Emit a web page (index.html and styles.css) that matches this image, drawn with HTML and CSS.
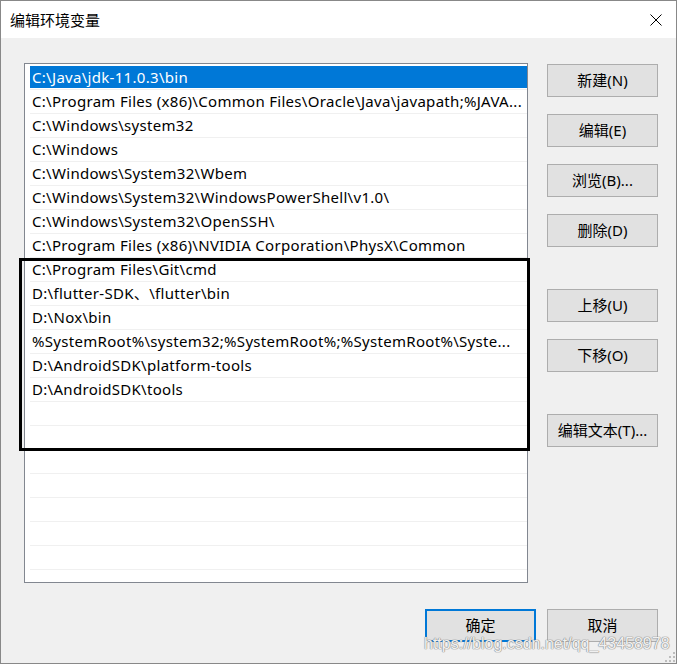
FILE: index.html
```html
<!DOCTYPE html>
<html lang="zh-CN">
<head>
<meta charset="utf-8">
<title>编辑环境变量</title>
<link rel="stylesheet" href="styles.css">
</head>
<body>
<div class="window">
  <div class="titlebar">
    <span class="title">编辑环境变量</span>
    <svg class="close" width="12" height="12" viewBox="0 0 12 12"><path d="M0.5 0.5L11.5 11.5M11.5 0.5L0.5 11.5" stroke="#000" stroke-width="1" fill="none"/></svg>
  </div>
  <div class="content">
    <div class="main">
      <div class="list">
        <div class="row selected">C:\Java\jdk-11.0.3\bin</div>
        <div class="row">C:\Program Files (x86)\Common Files\Oracle\Java\javapath;%JAVA...</div>
        <div class="row">C:\Windows\system32</div>
        <div class="row">C:\Windows</div>
        <div class="row">C:\Windows\System32\Wbem</div>
        <div class="row">C:\Windows\System32\WindowsPowerShell\v1.0\</div>
        <div class="row">C:\Windows\System32\OpenSSH\</div>
        <div class="row">C:\Program Files (x86)\NVIDIA Corporation\PhysX\Common</div>
        <div class="row">C:\Program Files\Git\cmd</div>
        <div class="row">D:\flutter-SDK、\flutter\bin</div>
        <div class="row">D:\Nox\bin</div>
        <div class="row">%SystemRoot%\system32;%SystemRoot%;%SystemRoot%\Syste...</div>
        <div class="row">D:\AndroidSDK\platform-tools</div>
        <div class="row">D:\AndroidSDK\tools</div>
        <div class="row"></div>
        <div class="row"></div>
        <div class="row"></div>
        <div class="row"></div>
        <div class="row"></div>
        <div class="row"></div>
        <div class="row"></div>
        <div class="row"></div>
      </div>
      <div class="side">
        <div class="group">
          <div class="btn">新建(N)</div>
          <div class="btn">编辑(E)</div>
          <div class="btn">浏览(B)...</div>
          <div class="btn">删除(D)</div>
        </div>
        <div class="group">
          <div class="btn">上移(U)</div>
          <div class="btn">下移(O)</div>
        </div>
        <div class="group">
          <div class="btn">编辑文本(T)...</div>
        </div>
      </div>
    </div>
    <div class="footer">
      <div class="btn default">确定</div>
      <div class="btn">取消</div>
    </div>
  </div>
  <div class="mark"></div>
  <div class="watermark">https://blog.csdn.net/qq_43458978</div>
  <svg class="grip" width="12" height="12" viewBox="0 0 12 12">
    <rect x="9" y="1" width="2" height="2" fill="#bdbdbd"/>
    <rect x="5" y="5" width="2" height="2" fill="#bdbdbd"/>
    <rect x="9" y="5" width="2" height="2" fill="#bdbdbd"/>
    <rect x="1" y="9" width="2" height="2" fill="#bdbdbd"/>
    <rect x="5" y="9" width="2" height="2" fill="#bdbdbd"/>
    <rect x="9" y="9" width="2" height="2" fill="#bdbdbd"/>
  </svg>
</div>
</body>
</html>
```
FILE: styles.css
```css
html, body {
  margin: 0;
  padding: 0;
  background: #f0f0f0;
}
.window {
  position: relative;
  box-sizing: border-box;
  width: 677px;
  height: 664px;
  border: 1px solid #888888;
  background: #f0f0f0;
  font-family: "Noto Sans", "Noto Sans CJK SC", sans-serif;
  font-size: 15px;
  color: #000;
  overflow: hidden;
}
.titlebar {
  height: 37px;
  background: #fff;
  display: flex;
  align-items: center;
  justify-content: space-between;
  padding: 0 14px 0 9px;
}
.title {
  font-family: "Noto Sans CJK SC", sans-serif;
  font-size: 15px;
  line-height: 1;
  padding-bottom: 1px;
}
.close {
  display: block;
  margin-top: 1px;
}
.content {
  padding: 25px 18px 0 23px;
}
.main {
  display: flex;
  gap: 19px;
}
.list {
  box-sizing: border-box;
  width: 504px;
  height: 520px;
  border: 1px solid #828790;
  background: #fff;
  padding: 2px 0 0 5px;
  overflow: hidden;
}
.row {
  box-sizing: border-box;
  height: 24px;
  line-height: 22px;
  padding-left: 2px;
  border-bottom: 1px solid #f0f0f0;
  white-space: nowrap;
  overflow: hidden;
  letter-spacing: 0.3px;
}
.row.selected {
  background: linear-gradient(#0078d7 0 22px, transparent 22px);
  color: #fff;
}
.side {
  width: 111px;
  padding-top: 1px;
  display: flex;
  flex-direction: column;
  gap: 42px;
}
.group {
  display: flex;
  flex-direction: column;
  gap: 17px;
}
.btn {
  box-sizing: border-box;
  width: 111px;
  height: 33px;
  border: 1px solid #adadad;
  background: #e1e1e1;
  display: flex;
  align-items: center;
  justify-content: center;
  font-size: 15px;
  line-height: 1;
  padding-bottom: 1px;
}
.footer {
  display: flex;
  justify-content: flex-end;
  gap: 11px;
  margin-top: 26px;
}
.btn.default {
  border: 2px solid #0078d7;
}
.mark {
  position: absolute;
  left: 18px;
  top: 257px;
  width: 511px;
  height: 193px;
  box-sizing: border-box;
  border: 3px solid #000;
}
.watermark {
  position: absolute;
  left: 423px;
  top: 634px;
  font-family: "Liberation Sans", Arial, sans-serif;
  font-size: 16px;
  color: rgba(255, 255, 255, 0.9);
  text-shadow: 0 0 1px #8a8a8a, 0 0 1px #8a8a8a, 0 0 1px #8a8a8a;
  white-space: nowrap;
}
.grip {
  position: absolute;
  right: 0;
  bottom: 0;
}
```
